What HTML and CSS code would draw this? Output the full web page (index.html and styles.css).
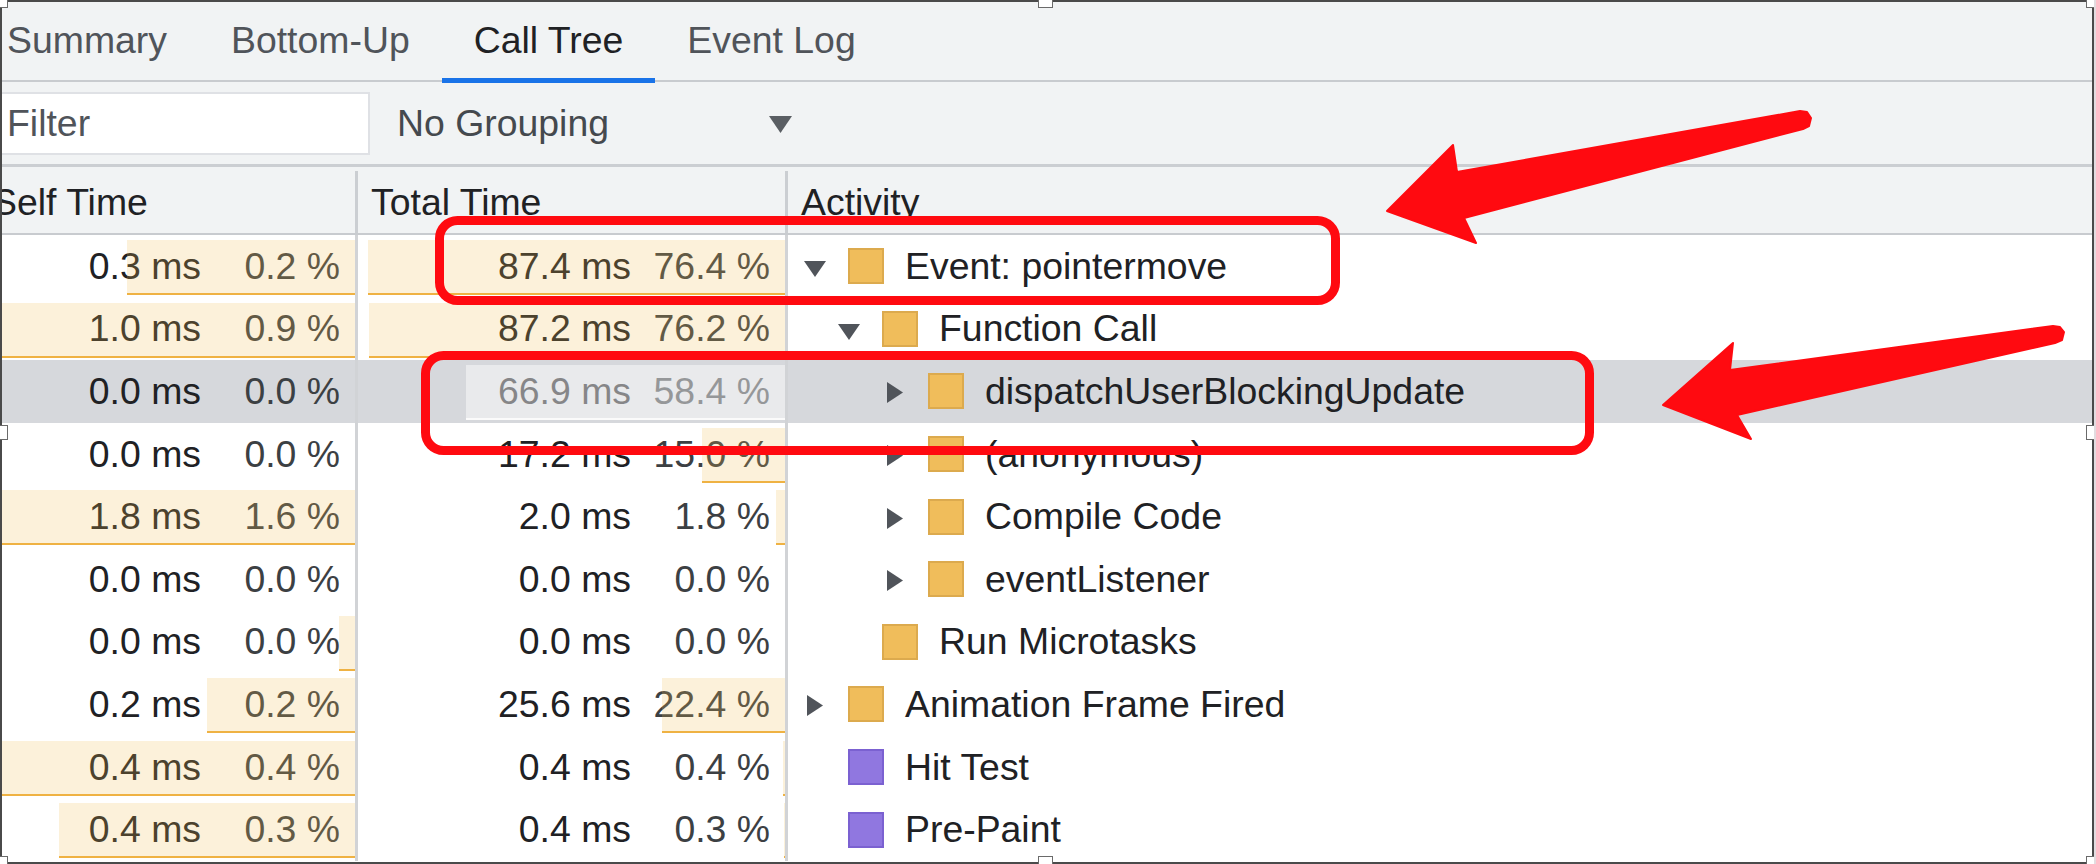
FILE: index.html
```html
<!DOCTYPE html>
<html>
<head>
<meta charset="utf-8">
<link rel="stylesheet" href="styles.css">
</head>
<body>
<div class="shot">
  <div class="panel">
    <div class="tabbar">
      <div class="tab">Summary</div>
      <div class="tab">Bottom-Up</div>
      <div class="tab active">Call Tree</div>
      <div class="tab">Event Log</div>
    </div>
    <div class="toolbar">
      <div class="filter">Filter</div>
      <div class="select">
        <span>No Grouping</span>
        <svg class="dd" width="23" height="17" viewBox="0 0 23 17"><polygon points="0,0 23,0 11.5,17" fill="#5a5e63"/></svg>
      </div>
    </div>
    <div class="grid">
      <div class="row head">
        <div class="cell self htxt">Self Time</div>
        <div class="cell total htxt">Total Time</div>
        <div class="cell act htxt">Activity</div>
      </div>

      <div class="row">
        <div class="cell self num"><span class="ms">0.3 ms</span><span class="pct">0.2 %</span><div class="bar" style="width:228px"></div></div>
        <div class="cell total num"><span class="ms">87.4 ms</span><span class="pct">76.4 %</span><div class="bar" style="width:417px"></div></div>
        <div class="cell act lv1"><span class="tog down"><svg width="22" height="16" viewBox="0 0 22 16"><polygon points="0,0 22,0 11,16"/></svg></span><span class="sq"></span><span class="name">Event: pointermove</span></div>
      </div>

      <div class="row">
        <div class="cell self num"><span class="ms">1.0 ms</span><span class="pct">0.9 %</span><div class="bar" style="width:740px"></div></div>
        <div class="cell total num"><span class="ms">87.2 ms</span><span class="pct">76.2 %</span><div class="bar" style="width:416px"></div></div>
        <div class="cell act lv2"><span class="tog down"><svg width="22" height="16" viewBox="0 0 22 16"><polygon points="0,0 22,0 11,16"/></svg></span><span class="sq"></span><span class="name">Function Call</span></div>
      </div>

      <div class="row sel">
        <div class="cell self num"><span class="ms">0.0 ms</span><span class="pct">0.0 %</span></div>
        <div class="cell total num"><span class="ms">66.9 ms</span><span class="pct">58.4 %</span><div class="bar" style="width:319px"></div></div>
        <div class="cell act lv3"><span class="tog right"><svg width="16" height="21" viewBox="0 0 16 21"><polygon points="0,0 16,10.5 0,21"/></svg></span><span class="sq"></span><span class="name">dispatchUserBlockingUpdate</span></div>
      </div>

      <div class="row">
        <div class="cell self num"><span class="ms">0.0 ms</span><span class="pct">0.0 %</span></div>
        <div class="cell total num"><span class="ms">17.2 ms</span><span class="pct">15.0 %</span><div class="bar" style="width:83px"></div></div>
        <div class="cell act lv3"><span class="tog right"><svg width="16" height="21" viewBox="0 0 16 21"><polygon points="0,0 16,10.5 0,21"/></svg></span><span class="sq"></span><span class="name">(anonymous)</span></div>
      </div>

      <div class="row">
        <div class="cell self num"><span class="ms">1.8 ms</span><span class="pct">1.6 %</span><div class="bar" style="width:1330px"></div></div>
        <div class="cell total num"><span class="ms">2.0 ms</span><span class="pct">1.8 %</span><div class="bar" style="width:9px"></div></div>
        <div class="cell act lv3"><span class="tog right"><svg width="16" height="21" viewBox="0 0 16 21"><polygon points="0,0 16,10.5 0,21"/></svg></span><span class="sq"></span><span class="name">Compile Code</span></div>
      </div>

      <div class="row">
        <div class="cell self num"><span class="ms">0.0 ms</span><span class="pct">0.0 %</span></div>
        <div class="cell total num"><span class="ms">0.0 ms</span><span class="pct">0.0 %</span></div>
        <div class="cell act lv3"><span class="tog right"><svg width="16" height="21" viewBox="0 0 16 21"><polygon points="0,0 16,10.5 0,21"/></svg></span><span class="sq"></span><span class="name">eventListener</span></div>
      </div>

      <div class="row">
        <div class="cell self num"><span class="ms">0.0 ms</span><span class="pct">0.0 %</span><div class="bar" style="width:16px"></div></div>
        <div class="cell total num"><span class="ms">0.0 ms</span><span class="pct">0.0 %</span></div>
        <div class="cell act lv2"><span class="tog"></span><span class="sq"></span><span class="name">Run Microtasks</span></div>
      </div>

      <div class="row">
        <div class="cell self num"><span class="ms">0.2 ms</span><span class="pct">0.2 %</span><div class="bar" style="width:148px"></div></div>
        <div class="cell total num"><span class="ms">25.6 ms</span><span class="pct">22.4 %</span><div class="bar" style="width:123px"></div></div>
        <div class="cell act lv1"><span class="tog right"><svg width="16" height="21" viewBox="0 0 16 21"><polygon points="0,0 16,10.5 0,21"/></svg></span><span class="sq"></span><span class="name">Animation Frame Fired</span></div>
      </div>

      <div class="row">
        <div class="cell self num"><span class="ms">0.4 ms</span><span class="pct">0.4 %</span><div class="bar" style="width:380px"></div></div>
        <div class="cell total num"><span class="ms">0.4 ms</span><span class="pct">0.4 %</span><div class="bar" style="width:2px"></div></div>
        <div class="cell act lv1"><span class="tog"></span><span class="sq purple"></span><span class="name">Hit Test</span></div>
      </div>

      <div class="row">
        <div class="cell self num"><span class="ms">0.4 ms</span><span class="pct">0.3 %</span><div class="bar" style="width:296px"></div></div>
        <div class="cell total num"><span class="ms">0.4 ms</span><span class="pct">0.3 %</span><div class="bar" style="width:1.5px"></div></div>
        <div class="cell act lv1"><span class="tog"></span><span class="sq purple"></span><span class="name">Pre-Paint</span></div>
      </div>
    </div>
  </div>

  <svg class="annot" width="2096" height="864" viewBox="0 0 2096 864">
    <rect x="439.5" y="220.5" width="896" height="80" rx="18" ry="18" fill="none" stroke="#ff0a10" stroke-width="9"/>
    <rect x="425.5" y="355.5" width="1164" height="95" rx="18" ry="18" fill="none" stroke="#ff0a10" stroke-width="9"/>
    <polygon points="1387,211 1453,145 1457,172 1800,111 1807,112 1811,118 1809,126 1803,129 1464,218 1476,243" fill="#ff0a10" stroke="#ff0a10" stroke-width="2" stroke-linejoin="round"/>
    <polygon points="1663,405 1733,343 1730,370 2053,326 2060,327 2064,332 2062,340 2055,343 1737,415 1751,439" fill="#ff0a10" stroke="#ff0a10" stroke-width="2" stroke-linejoin="round"/>
  </svg>

  <div class="frame"></div>
  <div class="handle h-tl"></div>
  <div class="handle h-tm"></div>
  <div class="handle h-tr"></div>
  <div class="handle h-ml"></div>
  <div class="handle h-mr"></div>
  <div class="handle h-bl"></div>
  <div class="handle h-bm"></div>
  <div class="handle h-br"></div>
</div>
</body>
</html>
```

FILE: styles.css
```css
* { box-sizing: border-box; }
html, body { margin: 0; padding: 0; }
body {
  width: 2096px;
  height: 864px;
  overflow: hidden;
  background: #e3dce0;
  font-family: "Liberation Sans", Arial, Helvetica, sans-serif;
}
.shot {
  position: relative;
  width: 2094px;
  height: 864px;
  overflow: hidden;
  background: #ffffff;
}
.panel {
  margin-left: -21px;
  width: 2113px;
  font-size: 37.4px;
  color: #202124;
}

/* tabs */
.tabbar {
  display: flex;
  height: 82px;
  background: #f1f3f4;
  border-bottom: 2px solid #c8cbcf;
}
.tab {
  position: relative;
  display: flex;
  align-items: center;
  padding: 0 32px;
  color: #50545a;
  white-space: nowrap;
}
.tab:first-child { margin-left: -4px; }
.tab.active { color: #202124; }
.tab.active::after {
  content: "";
  position: absolute;
  left: 0;
  right: 0;
  bottom: -3px;
  height: 5px;
  background: #1a73e8;
}

/* toolbar */
.toolbar {
  display: flex;
  align-items: center;
  height: 85px;
  background: #f1f3f4;
  border-bottom: 3px solid #cbced2;
}
.filter {
  display: flex;
  align-items: center;
  width: 391px;
  height: 63px;
  padding-left: 26px;
  background: #ffffff;
  border: 2px solid #dfe1e5;
  color: #50545a;
}
.select {
  display: flex;
  align-items: center;
  justify-content: space-between;
  margin-left: 27px;
  width: 395px;
  color: #45494e;
}
.dd { display: block; margin-top: 2px; }

/* grid */
.row {
  display: flex;
  height: 62.6px;
  background: #ffffff;
}
.row.head {
  height: 68px;
  padding-top: 4px;
  background: #f1f3f4;
  border-bottom: 2px solid #c8cbcf;
}
.row.sel { background: #d6d8dc; }
.cell {
  position: relative;
  display: flex;
  align-items: center;
  overflow: hidden;
  white-space: nowrap;
}
.cell.self { width: 379px; border-right: 3px solid #d1d3d6; }
.cell.total { width: 430px; border-right: 3px solid #d1d3d6; }
.cell.act { flex: 1; }
.head .cell.self, .head .cell.total { border-right-color: #cbced2; }
.htxt { padding-left: 13px; }
.num {
  justify-content: flex-end;
  padding-right: 15px;
}
.ms { color: #202124; }
.pct {
  display: inline-block;
  width: 139px;
  text-align: right;
  color: #3c4043;
}
.bar {
  position: absolute;
  right: 0;
  top: 5px;
  bottom: 2.5px;
  background: rgba(240, 188, 78, 0.21);
  border-bottom: 2.5px solid #efb243;
}
.sel .bar {
  background: rgba(255, 255, 255, 0.46);
  border-bottom-color: rgba(255, 255, 255, 0.8);
}

/* activity */
.lv1 { padding-left: 15px; }
.lv2 { padding-left: 49px; }
.lv3 { padding-left: 95px; }
.tog {
  display: flex;
  align-items: center;
  justify-content: center;
  width: 24px;
  height: 30px;
  margin-right: 21px;
  flex: none;
}
.tog svg { display: block; fill: #50545a; }
.tog.down svg { margin-top: 6px; }
.tog.right svg { margin-top: 3px; }
.sq {
  flex: none;
  width: 36px;
  height: 36px;
  margin-right: 21px;
  background: #f0bd5b;
  border: 2px solid #dcaa4e;
}
.sq.purple {
  background: #9077e0;
  border-color: #7b61d1;
}
.name { color: #202124; }

/* annotations and frame */
.annot {
  position: absolute;
  left: 0;
  top: 0;
  pointer-events: none;
}
.frame {
  position: absolute;
  left: 0;
  top: 0;
  width: 2094px;
  height: 864px;
  border: 2px solid #4a4a4a;
  pointer-events: none;
}
.handle {
  position: absolute;
  width: 15px;
  height: 15px;
  background: #ffffff;
  border: 1px solid #6a6a6a;
}
.h-tl { left: -7px; top: -7px; }
.h-tm { left: 1038px; top: -7px; }
.h-tr { left: 2086px; top: -7px; }
.h-ml { left: -7px; top: 425px; }
.h-mr { left: 2086px; top: 425px; }
.h-bl { left: -7px; top: 856px; }
.h-bm { left: 1038px; top: 856px; }
.h-br { left: 2086px; top: 856px; }
```
